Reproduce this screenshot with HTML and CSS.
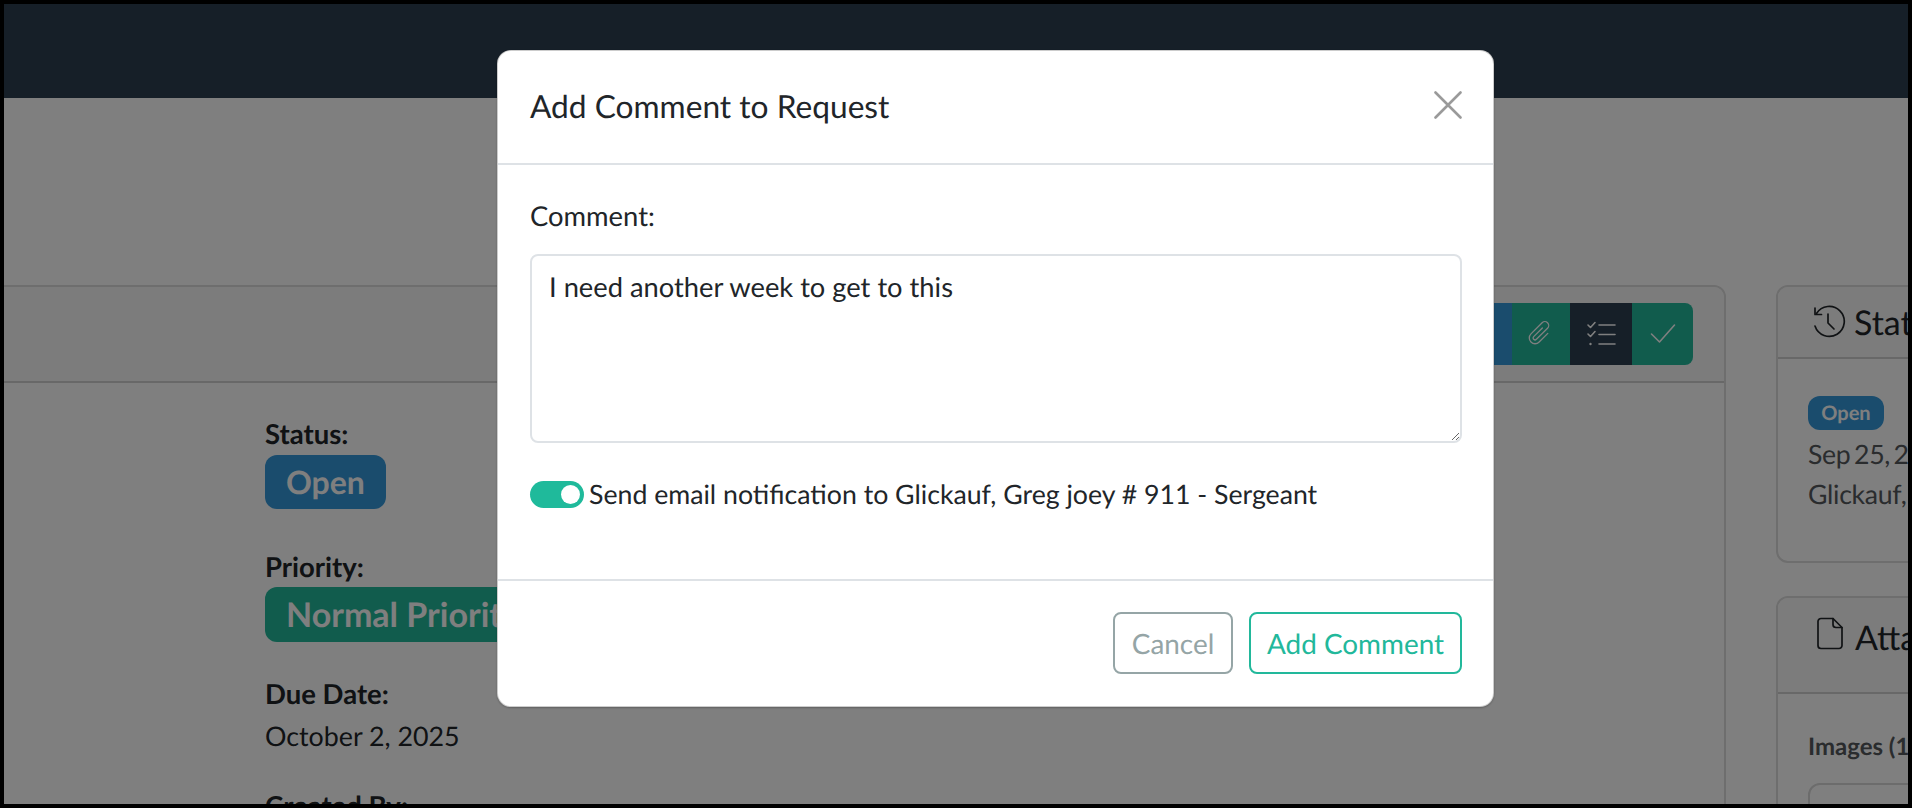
FILE: index.html
```html
<!DOCTYPE html>
<html lang="en">
<head>
    <meta charset="UTF-8">
    <meta name="viewport" content="width=device-width, initial-scale=1.0">
    <title>Add Comment to Request</title>
    <link rel="stylesheet" href="styles.css">
</head>
<body>
    <div class="screen">
        <div class="navbar"></div>

        <div class="page">
            <div class="card request-card">
                <div class="card-header request-header">
                    <div class="action-group">
                        <div class="action action-blue">
                            <svg width="26" height="26" viewBox="0 0 26 26" fill="none" stroke="currentColor" stroke-width="1.5"><circle cx="13" cy="13" r="10"/></svg>
                        </div>
                        <div class="action action-green attach">
                            <svg class="clip-icon" width="28" height="28" viewBox="0 0 16 16" fill="none" stroke="currentColor" stroke-width="0.75" stroke-linecap="round"><path d="M10.5 5 V12 a3.3 3.3 0 0 1 -6.6 0 V3 a2.2 2.2 0 0 1 4.4 0 V12 a1.1 1.1 0 0 1 -2.2 0 V5"/></svg>
                        </div>
                        <div class="action action-dark list">
                            <svg width="30" height="26" viewBox="0 0 30 26" fill="none" stroke="currentColor" stroke-width="1.6" stroke-linecap="round" stroke-linejoin="round"><path d="M2 4 L4.5 6.5 L9 1.5"/><path d="M2 13 L4.5 15.5 L9 10.5"/><path d="M13 4 H29 M13 13.5 H29 M13 23 H29"/><circle cx="4.5" cy="23" r="1.2" fill="currentColor" stroke="none"/></svg>
                        </div>
                        <div class="action action-green check">
                            <svg width="26" height="22" viewBox="0 0 26 22" fill="none" stroke="currentColor" stroke-width="1.6" stroke-linecap="round" stroke-linejoin="round"><path d="M1.5 11 L9.5 19 L24.5 2"/></svg>
                        </div>
                    </div>
                </div>
                <div class="card-body request-body">
                    <div class="field field-status">
                        <div class="field-label">Status:</div>
                        <span class="badge badge-blue">Open</span>
                    </div>
                    <div class="field field-priority">
                        <div class="field-label">Priority:</div>
                        <span class="badge badge-green">Normal Priority</span>
                    </div>
                    <div class="field field-due">
                        <div class="field-label">Due Date:</div>
                        <div class="field-value">October 2, 2025</div>
                    </div>
                    <div class="field">
                        <div class="field-label">Created By:</div>
                    </div>
                </div>
            </div>

            <div class="side-column">
                <div class="card status-card">
                    <div class="card-header side-header">
                        <svg class="side-icon" width="34" height="34" viewBox="0 0 34 34" fill="none" stroke="currentColor" stroke-width="1.7" stroke-linecap="round" stroke-linejoin="round"><path d="M4.5 8.5 A15 15 0 1 1 3 21"/><path d="M3 3 V9.5 H9.5"/><path d="M16 9 V18 L22 24"/></svg>
                        <span class="side-title">Status History</span>
                    </div>
                    <div class="card-body status-body">
                        <span class="badge badge-small">Open</span>
                        <div class="status-line">Sep 25, 2025</div>
                        <div class="status-line">Glickauf, Greg</div>
                    </div>
                </div>
                <div class="card attach-card">
                    <div class="card-header side-header attach-header">
                        <svg class="side-icon" width="26" height="33" viewBox="0 0 26 33" fill="none" stroke="currentColor" stroke-width="1.7" stroke-linecap="round" stroke-linejoin="round"><path d="M16 1.5 H4 A3 3 0 0 0 1 4.5 V28.5 A3 3 0 0 0 4 31.5 H22 A3 3 0 0 0 25 28.5 V10.5 Z"/><path d="M16 1.5 V7.5 A3 3 0 0 0 19 10.5 H25"/></svg>
                        <span class="side-title">Attachments</span>
                    </div>
                    <div class="card-body attach-body">
                        <div class="images-label">Images (1)</div>
                        <div class="image-box"></div>
                    </div>
                </div>
            </div>
        </div>

        <div class="backdrop"></div>

        <div class="modal-wrap">
            <div class="modal">
                <div class="modal-header">
                    <h2 class="modal-title">Add Comment to Request</h2>
                    <svg class="close-icon" width="28" height="28" viewBox="0 0 28 28" stroke="currentColor" stroke-width="2.6" stroke-linecap="round"><path d="M1.5 1.5 L26.5 26.5 M26.5 1.5 L1.5 26.5"/></svg>
                </div>
                <div class="modal-body">
                    <label class="comment-label" for="comment">Comment:</label>
                    <textarea class="comment-input" id="comment">I need another week to get to this</textarea>
                    <label class="notify-row">
                        <span class="toggle"></span>
                        <span>Send email notification to Glickauf, Greg joey # 911 - Sergeant</span>
                    </label>
                </div>
                <div class="modal-footer">
                    <button class="button button-cancel">Cancel</button>
                    <button class="button button-add">Add Comment</button>
                </div>
            </div>
        </div>
    </div>
</body>
</html>
```

FILE: styles.css
```css
* {
    margin: 0;
    padding: 0;
    box-sizing: border-box;
}

body {
    font-family: 'Lato', sans-serif;
    text-rendering: geometricPrecision;
    background: #000;
    color: #212529;
    height: 808px;
    padding: 4px;
    overflow: hidden;
}

.screen {
    position: relative;
    height: 800px;
    background: #fff;
    overflow: hidden;
}

.navbar {
    height: 94px;
    background: #2c3e50;
}

.page {
    display: flex;
    align-items: flex-start;
    gap: 50px;
    padding-top: 187px;
    margin-left: -20px;
}

.card {
    border: 2px solid #dcdcdc;
    border-radius: 12px;
    background: #fff;
}

.card-header {
    background: #f8f8f8;
    border-bottom: 2px solid #d0d0d0;
    border-radius: 10px 10px 0 0;
}

.request-card {
    width: 1742px;
    height: 700px;
    flex-shrink: 0;
}

.request-header {
    height: 96px;
    display: flex;
    justify-content: flex-end;
    align-items: center;
    padding-right: 31px;
}

.action-group {
    display: flex;
    height: 62px;
    border-radius: 8px;
    overflow: hidden;
}

.action {
    display: flex;
    align-items: center;
    justify-content: center;
    color: #fff;
}

.action-blue {
    width: 62px;
    background: #3498db;
}

.action-green {
    background: #22b89b;
}

.action-dark {
    background: #2c3e50;
}

.attach {
    width: 58px;
}

.clip-icon {
    transform: rotate(45deg);
}

.list {
    width: 62px;
}

.check {
    width: 61px;
}

.request-body {
    padding: 36px 0 0 279px;
}

.field-status {
    margin-bottom: 43px;
}

.field-priority {
    margin-bottom: 37px;
}

.field-due {
    margin-bottom: 37px;
}

.field-label {
    font-size: 27.5px;
    font-weight: 700;
    line-height: 30px;
}

.field-value {
    font-size: 26.8px;
    line-height: 36px;
    margin-top: 9px;
}

.badge {
    display: block;
    width: fit-content;
    border-radius: 12px;
    font-size: 32px;
    font-weight: 700;
    line-height: 54px;
    padding: 0 21px;
    color: #fff;
    margin-top: 6px;
}

.field-priority .badge {
    margin-top: 5px;
    font-size: 34px;
    line-height: 55px;
}

.badge-blue {
    background: #3498db;
}

.badge-green {
    background: #22b89b;
}

.side-column {
    width: 300px;
    flex-shrink: 0;
    display: flex;
    flex-direction: column;
    gap: 33px;
}

.side-header {
    display: flex;
    align-items: center;
    height: 72px;
    padding-left: 34px;
    gap: 8px;
    white-space: nowrap;
}

.attach-header {
    height: 96px;
    align-items: flex-start;
    padding-top: 19px;
    padding-left: 39px;
    gap: 12px;
}

.side-title {
    font-size: 34px;
}

.status-card {
    height: 278px;
}

.status-body {
    padding: 37px 0 0 30px;
    white-space: nowrap;
}

.badge-small {
    width: 76px;
    background: #3498db;
    font-size: 20px;
    line-height: 34px;
    padding: 0;
    text-align: center;
    margin: 0 0 4px;
}

.status-line {
    font-size: 26.67px;
    line-height: 40px;
    letter-spacing: -0.3px;
    word-spacing: -3px;
    color: #55595c;
}

.attach-card {
    height: 400px;
}

.attach-body {
    padding: 38px 0 0 30px;
}

.images-label {
    font-size: 24px;
    font-weight: 700;
    line-height: 30px;
    color: #55595c;
    white-space: nowrap;
}

.image-box {
    margin-top: 21px;
    height: 120px;
    border: 2px solid #d8d8d8;
    border-radius: 12px;
}

.backdrop {
    position: absolute;
    inset: 0;
    background: rgba(0, 0, 0, 0.5);
}

.modal-wrap {
    position: absolute;
    inset: 0;
    display: flex;
    justify-content: center;
    align-items: flex-start;
    padding: 46px 0 0 79px;
}

.modal {
    width: 997px;
    height: 657px;
    background: #fff;
    border-radius: 14px;
    border: 1px solid rgba(0, 0, 0, 0.2);
    box-shadow: 0 1px 2px rgba(0, 0, 0, 0.25);
    display: flex;
    flex-direction: column;
}

.modal-header {
    height: 114px;
    flex-shrink: 0;
    display: flex;
    align-items: center;
    justify-content: space-between;
    padding: 0 31px 2px 32px;
    border-bottom: 2px solid #dee2e6;
}

.modal-title {
    font-size: 31.7px;
    font-weight: 400;
}

.close-icon {
    color: #9a9a9a;
    margin-top: -2px;
}

.modal-body {
    flex-grow: 1;
    padding: 35px 31px 0 32px;
}

.comment-label {
    display: block;
    font-size: 27.4px;
    line-height: 32px;
    margin-bottom: 22px;
}

.comment-input {
    display: block;
    width: 100%;
    height: 189px;
    border: 2px solid #dee2e6;
    border-radius: 8px;
    padding: 13px 17px;
    font-family: 'Lato', sans-serif;
    text-rendering: geometricPrecision;
    font-size: 27.3px;
    line-height: 36px;
    color: #212529;
    outline: none;
}

.notify-row {
    display: flex;
    align-items: center;
    gap: 5px;
    margin-top: 33px;
    font-size: 26.7px;
    line-height: 36px;
}

.toggle {
    position: relative;
    width: 54px;
    height: 27px;
    border-radius: 14px;
    background: #1fba9b;
}

.toggle::after {
    content: '';
    position: absolute;
    top: 4px;
    right: 4px;
    width: 19px;
    height: 19px;
    border-radius: 50%;
    background: #fff;
}

.modal-footer {
    height: 127px;
    flex-shrink: 0;
    display: flex;
    justify-content: flex-end;
    align-items: center;
    gap: 16px;
    padding: 0 31px 1px;
    border-top: 2px solid #dee2e6;
}

.button {
    height: 62px;
    background: #fff;
    border-radius: 8px;
    border: 2px solid;
    font-family: 'Lato', sans-serif;
    text-rendering: geometricPrecision;
    font-size: 27.9px;
}

.button-cancel {
    width: 120px;
    color: #95a5a6;
    border-color: #95a5a6;
}

.button-add {
    width: 213px;
    color: #22b89b;
    border-color: #22b89b;
}
```
